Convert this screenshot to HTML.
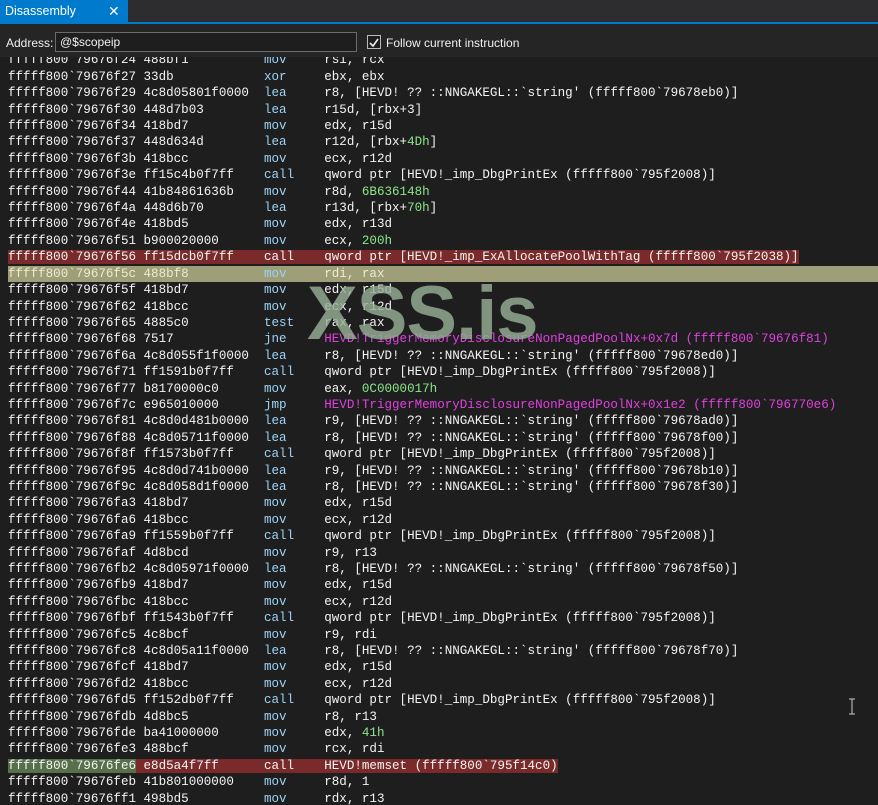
<!DOCTYPE html>
<html><head><meta charset="utf-8"><style>
body{margin:0;width:878px;height:805px;background:#1e1e1e;overflow:hidden;position:relative;font-family:"Liberation Sans",sans-serif}
.tabbar{position:absolute;left:0;top:0;width:878px;height:22px;background:#2d2d30}
.tab{position:absolute;left:0;top:0;width:128px;height:22px;background:#007acc;color:#fff;font-size:12.5px;line-height:22px}
.tab span{position:absolute;left:5px}
.tab i{position:absolute;left:108px;top:0;font-style:normal;font-size:14px}
.line{position:absolute;left:0;top:22px;width:878px;height:2px;background:#007acc}
.tool{position:absolute;left:0;top:24px;width:878px;height:33px;background:#252526}
.lbl{position:absolute;left:6px;top:36px;color:#f1f1f1;font-size:12px}
.inp{position:absolute;left:55px;top:32px;width:296px;height:18px;border:1px solid #6a6a6a;background:#1e1e1e;color:#f1f1f1;font-size:12px;line-height:18px;padding-left:4px;box-sizing:content-box}
.cb{position:absolute;left:367px;top:35px;width:12px;height:12px;border:1px solid #bbb;background:#1e1e1e}
.cbl{position:absolute;left:386px;top:36px;color:#f1f1f1;font-size:12px}
.code{position:absolute;left:0;top:57px;width:878px;height:748px;overflow:hidden}
pre{position:absolute;left:8px;top:-4.6px;margin:0;font-family:"Liberation Mono",monospace;font-size:12.55px;line-height:16.4px;color:#f4f4f4}
.m{color:#9cd3f8}.n{color:#8ce68c}.s{color:#e040e0}
.r{background:#7a2a2a}.o{background:#9e9e78;display:inline-block;width:870px;color:#ececd0}
.g{background:#56704a}
.wm{position:absolute;left:307px;top:270px;font:bold 76px "Liberation Sans",sans-serif;color:rgba(150,175,150,0.82);letter-spacing:-1px}
</style></head><body>
<div class="tabbar"><div class="tab"><span>Disassembly</span><i>✕</i></div></div>
<div class="line"></div>
<div class="tool"></div>
<div class="lbl">Address:</div>
<div class="inp">@$scopeip</div>
<div class="cb"><svg width="12" height="12" viewBox="0 0 12 12"><path d="M2 6 L5 9 L10 2" stroke="#eee" stroke-width="1.6" fill="none"/></svg></div>
<div class="cbl">Follow current instruction</div>
<div class="code"><pre>fffff800`79676f24 488bf1          <span class="m">mov</span>     rsi, rcx
fffff800`79676f27 33db            <span class="m">xor</span>     ebx, ebx
fffff800`79676f29 4c8d05801f0000  <span class="m">lea</span>     r8, [HEVD! ?? ::NNGAKEGL::`string' (fffff800`79678eb0)]
fffff800`79676f30 448d7b03        <span class="m">lea</span>     r15d, [rbx+3]
fffff800`79676f34 418bd7          <span class="m">mov</span>     edx, r15d
fffff800`79676f37 448d634d        <span class="m">lea</span>     r12d, [rbx+<span class="n">4Dh</span>]
fffff800`79676f3b 418bcc          <span class="m">mov</span>     ecx, r12d
fffff800`79676f3e ff15c4b0f7ff    <span class="m">call</span>    qword ptr [HEVD!_imp_DbgPrintEx (fffff800`795f2008)]
fffff800`79676f44 41b84861636b    <span class="m">mov</span>     r8d, <span class="n">6B636148h</span>
fffff800`79676f4a 448d6b70        <span class="m">lea</span>     r13d, [rbx+<span class="n">70h</span>]
fffff800`79676f4e 418bd5          <span class="m">mov</span>     edx, r13d
fffff800`79676f51 b900020000      <span class="m">mov</span>     ecx, <span class="n">200h</span>
<span class="r">fffff800`79676f56 ff15dcb0f7ff    call    qword ptr [HEVD!_imp_ExAllocatePoolWithTag (fffff800`795f2038)]</span>
<span class="o">fffff800`79676f5c 488bf8          <span class="m">mov</span>     rdi, rax</span>
fffff800`79676f5f 418bd7          <span class="m">mov</span>     edx, r15d
fffff800`79676f62 418bcc          <span class="m">mov</span>     ecx, r12d
fffff800`79676f65 4885c0          <span class="m">test</span>    rax, rax
fffff800`79676f68 7517            <span class="m">jne</span>     <span class="s">HEVD!TriggerMemoryDisclosureNonPagedPoolNx+0x7d (fffff800`79676f81)</span>
fffff800`79676f6a 4c8d055f1f0000  <span class="m">lea</span>     r8, [HEVD! ?? ::NNGAKEGL::`string' (fffff800`79678ed0)]
fffff800`79676f71 ff1591b0f7ff    <span class="m">call</span>    qword ptr [HEVD!_imp_DbgPrintEx (fffff800`795f2008)]
fffff800`79676f77 b8170000c0      <span class="m">mov</span>     eax, <span class="n">0C0000017h</span>
fffff800`79676f7c e965010000      <span class="m">jmp</span>     <span class="s">HEVD!TriggerMemoryDisclosureNonPagedPoolNx+0x1e2 (fffff800`796770e6)</span>
fffff800`79676f81 4c8d0d481b0000  <span class="m">lea</span>     r9, [HEVD! ?? ::NNGAKEGL::`string' (fffff800`79678ad0)]
fffff800`79676f88 4c8d05711f0000  <span class="m">lea</span>     r8, [HEVD! ?? ::NNGAKEGL::`string' (fffff800`79678f00)]
fffff800`79676f8f ff1573b0f7ff    <span class="m">call</span>    qword ptr [HEVD!_imp_DbgPrintEx (fffff800`795f2008)]
fffff800`79676f95 4c8d0d741b0000  <span class="m">lea</span>     r9, [HEVD! ?? ::NNGAKEGL::`string' (fffff800`79678b10)]
fffff800`79676f9c 4c8d058d1f0000  <span class="m">lea</span>     r8, [HEVD! ?? ::NNGAKEGL::`string' (fffff800`79678f30)]
fffff800`79676fa3 418bd7          <span class="m">mov</span>     edx, r15d
fffff800`79676fa6 418bcc          <span class="m">mov</span>     ecx, r12d
fffff800`79676fa9 ff1559b0f7ff    <span class="m">call</span>    qword ptr [HEVD!_imp_DbgPrintEx (fffff800`795f2008)]
fffff800`79676faf 4d8bcd          <span class="m">mov</span>     r9, r13
fffff800`79676fb2 4c8d05971f0000  <span class="m">lea</span>     r8, [HEVD! ?? ::NNGAKEGL::`string' (fffff800`79678f50)]
fffff800`79676fb9 418bd7          <span class="m">mov</span>     edx, r15d
fffff800`79676fbc 418bcc          <span class="m">mov</span>     ecx, r12d
fffff800`79676fbf ff1543b0f7ff    <span class="m">call</span>    qword ptr [HEVD!_imp_DbgPrintEx (fffff800`795f2008)]
fffff800`79676fc5 4c8bcf          <span class="m">mov</span>     r9, rdi
fffff800`79676fc8 4c8d05a11f0000  <span class="m">lea</span>     r8, [HEVD! ?? ::NNGAKEGL::`string' (fffff800`79678f70)]
fffff800`79676fcf 418bd7          <span class="m">mov</span>     edx, r15d
fffff800`79676fd2 418bcc          <span class="m">mov</span>     ecx, r12d
fffff800`79676fd5 ff152db0f7ff    <span class="m">call</span>    qword ptr [HEVD!_imp_DbgPrintEx (fffff800`795f2008)]
fffff800`79676fdb 4d8bc5          <span class="m">mov</span>     r8, r13
fffff800`79676fde ba41000000      <span class="m">mov</span>     edx, <span class="n">41h</span>
fffff800`79676fe3 488bcf          <span class="m">mov</span>     rcx, rdi
<span class="g">fffff800`79676fe6</span><span class="r"> e8d5a4f7ff      call    HEVD!memset (fffff800`795f14c0)</span>
fffff800`79676feb 41b801000000    <span class="m">mov</span>     r8d, 1
fffff800`79676ff1 498bd5          <span class="m">mov</span>     rdx, r13
</pre></div>
<div class="wm">XSS.is</div>
<svg style="position:absolute;left:847px;top:698px" width="10" height="18"><path d="M2 1h6M5 1v15M2 16h6" stroke="#ccc" stroke-width="1" fill="none"/></svg>
</body></html>
